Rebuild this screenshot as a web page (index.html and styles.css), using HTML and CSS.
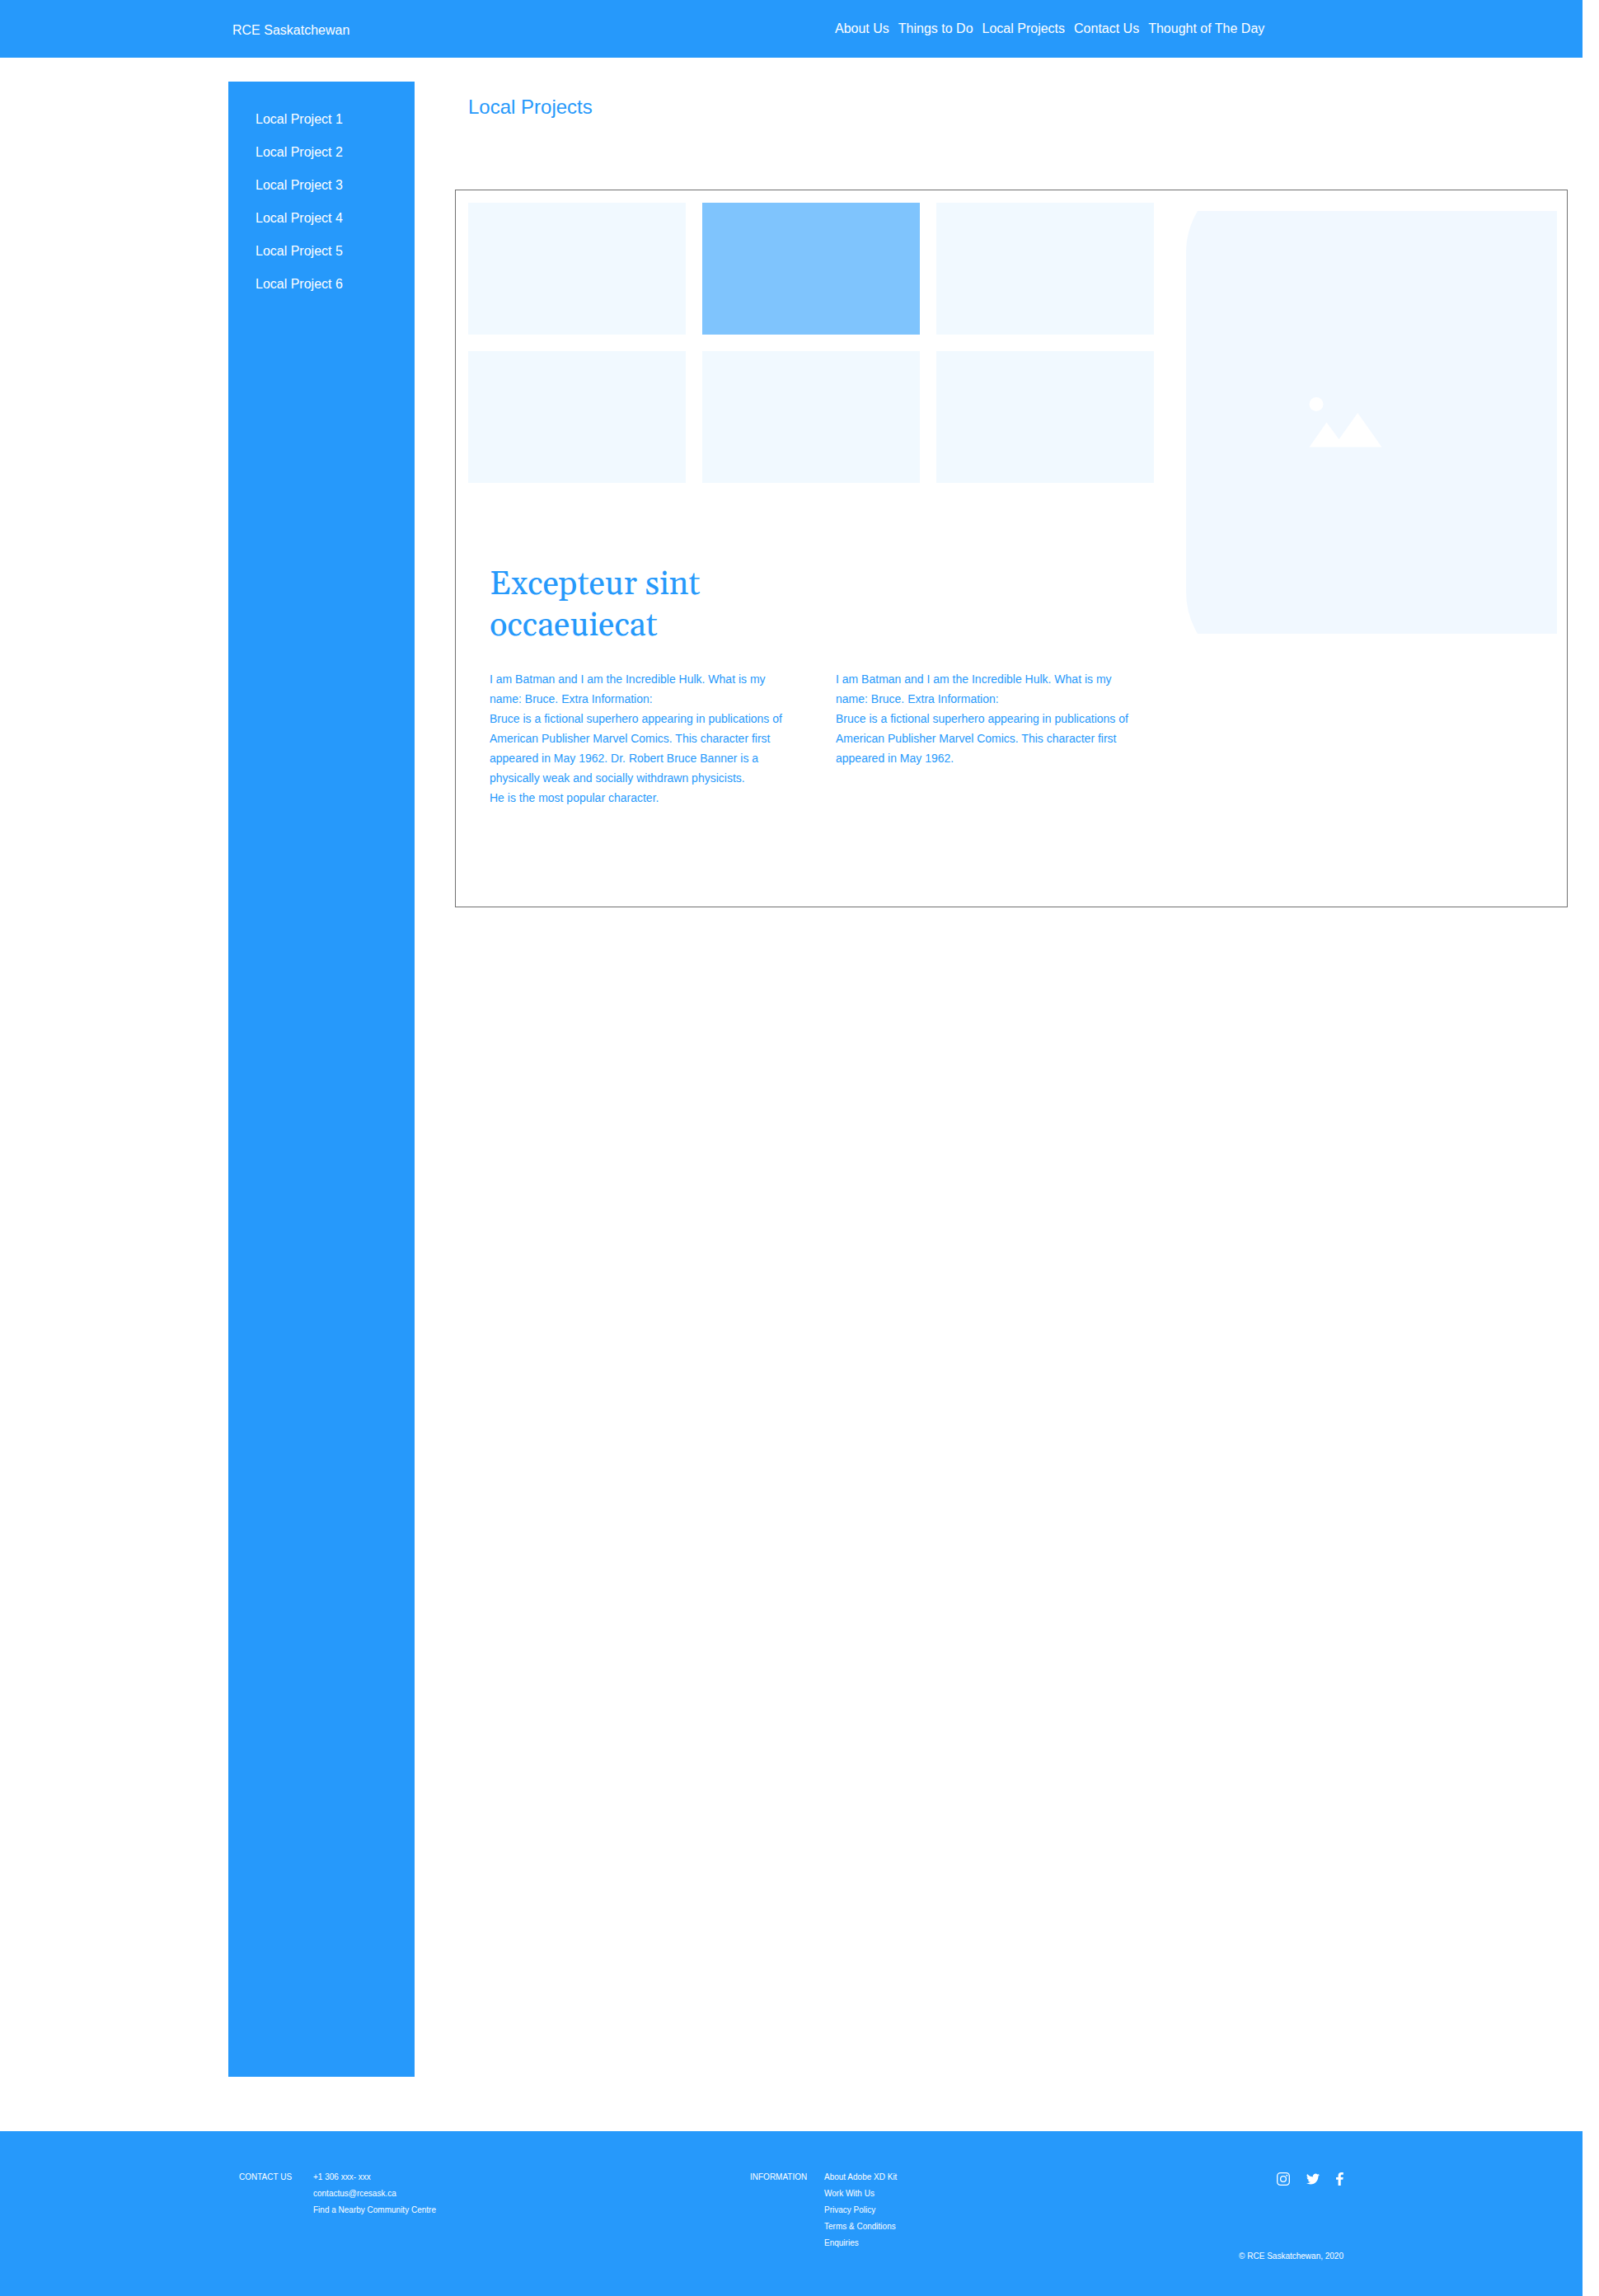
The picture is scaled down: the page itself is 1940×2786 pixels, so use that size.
FILE: index.html
```html
<!DOCTYPE html>
<html lang="en">
<head>
  <meta charset="utf-8">
  <meta name="viewport" content="width=device-width, initial-scale=1">
  <title>Local Projects - RCE Saskatchewan</title>
  <link rel="stylesheet" href="styles.css">
</head>
<body>
  <header class="site-header">
    <a class="brand" href="#">RCE Saskatchewan</a>
    <nav class="site-nav" aria-label="Main">
      <a href="#">About Us</a>
      <a href="#">Things to Do</a>
      <a href="#">Local Projects</a>
      <a href="#">Contact Us</a>
      <a href="#">Thought of The Day</a>
    </nav>
  </header>

  <main class="layout">
    <nav class="sidebar" aria-label="Projects">
      <a href="#">Local Project 1</a>
      <a href="#">Local Project 2</a>
      <a href="#">Local Project 3</a>
      <a href="#">Local Project 4</a>
      <a href="#">Local Project 5</a>
      <a href="#">Local Project 6</a>
    </nav>

    <section class="content">
      <h1 class="page-title">Local Projects</h1>
      <div class="panel">
        <div class="panel-main">
          <div class="tiles">
            <div class="tile"></div>
            <div class="tile tile-active"></div>
            <div class="tile"></div>
            <div class="tile"></div>
            <div class="tile"></div>
            <div class="tile"></div>
          </div>
          <article class="story">
            <h2 class="story-title">Excepteur sint occaeuiecat</h2>
            <div class="story-columns">
              <p>I am Batman and I am the Incredible Hulk. What is my name: Bruce. Extra Information:<br>Bruce is a fictional superhero appearing in publications of American Publisher Marvel Comics. This character first appeared in May 1962. Dr. Robert Bruce Banner is a physically weak and socially withdrawn physicists.<br>He is the most popular character.</p>
              <p>I am Batman and I am the Incredible Hulk. What is my name: Bruce. Extra Information:<br>Bruce is a fictional superhero appearing in publications of American Publisher Marvel Comics. This character first appeared in May 1962.</p>
            </div>
          </article>
        </div>
        <svg class="picture" viewBox="0 0 450 513" aria-hidden="true">
          <path class="picture-back" d="M14 0H450V513H14A100 100 0 0 1 0 462V51A100 100 0 0 1 14 0Z"/>
          <circle class="picture-mark" cx="158" cy="234.5" r="8.5"/>
          <path class="picture-mark" d="M149.5 286.5L170.5 256.5L185.500 277L208.200 245L237.500 286.5Z"/>
        </svg>
      </div>
    </section>
  </main>

  <footer class="site-footer">
    <div class="footer-group">
      <h3>CONTACT US</h3>
      <ul>
        <li>+1 306 xxx- xxx</li>
        <li><a href="#">contactus@rcesask.ca</a></li>
        <li><a href="#">Find a Nearby Community Centre</a></li>
      </ul>
    </div>
    <div class="footer-group">
      <h3>INFORMATION</h3>
      <ul>
        <li><a href="#">About Adobe XD Kit</a></li>
        <li><a href="#">Work With Us</a></li>
        <li><a href="#">Privacy Policy</a></li>
        <li><a href="#">Terms &amp; Conditions</a></li>
        <li><a href="#">Enquiries</a></li>
      </ul>
    </div>
    <div class="footer-end">
      <div class="social">
        <a href="#" aria-label="Instagram">
          <svg width="16" height="16" viewBox="0 0 16 16" fill="none" stroke="#fff" stroke-width="1.3">
            <rect x="0.7" y="0.7" width="14.6" height="14.6" rx="3.8"/>
            <circle cx="8" cy="8" r="3.4"/>
            <circle cx="12.300" cy="3.700" r="0.950" fill="#fff" stroke="none"/>
          </svg>
        </a>
        <a href="#" aria-label="Twitter">
          <svg width="16" height="16" viewBox="0 0 24 24" fill="#fff">
            <path d="M23.950 4.570a10 10 0 0 1-2.820.77 4.960 4.960 0 0 0 2.160-2.720c-.95.56-2 .96-3.130 1.190a4.920 4.920 0 0 0-8.380 4.480C7.690 8.100 4.070 6.130 1.640 3.160a4.920 4.920 0 0 0 1.520 6.570 4.900 4.900 0 0 1-2.230-.61v.06a4.920 4.920 0 0 0 3.950 4.830 5 5 0 0 1-2.210.08 4.940 4.940 0 0 0 4.600 3.420A9.870 9.870 0 0 1 0 19.540a13.990 13.990 0 0 0 7.550 2.210c9.050 0 14-7.500 14-13.980 0-.21 0-.42-.02-.63a9.940 9.940 0 0 0 2.460-2.550z"/>
          </svg>
        </a>
        <a href="#" aria-label="Facebook">
          <svg width="9" height="16" viewBox="0 0 9 16" fill="#fff">
            <path d="M2.600 16V8.800H0V5.900h2.600V3.800C2.600 1.400 4.100 0 6.400 0 7.500 0 8.500.1 8.800.1v2.700H7.200c-1.300 0-1.500.6-1.500 1.500v1.600h3l-.4 2.900H5.700V16Z"/>
          </svg>
        </a>
      </div>
      <p>© RCE Saskatchewan, 2020</p>
    </div>
  </footer>
</body>
</html>
```
FILE: styles.css
```css
* {
  box-sizing: border-box;
}

body {
  display: flex;
  flex-direction: column;
  min-height: 100vh;
  margin: 0;
  padding-right: 20px;
  background: #fff;
  color: #2699fb;
  font-family: "Liberation Sans", Arial, sans-serif;
  font-size: 16px;
  line-height: 20px;
}

h1, h2, h3, p, ul {
  margin: 0;
  padding: 0;
  font-weight: normal;
}

ul {
  list-style: none;
}

a {
  color: inherit;
  text-decoration: none;
}

.site-header {
  display: grid;
  grid-template-columns: 731px 1fr;
  align-items: center;
  min-height: 70px;
  padding-left: 282px;
  background: #2699fb;
  color: #fff;
}

.brand {
  padding-top: 4px;
}

.site-nav {
  display: flex;
  gap: 11px;
}

.layout {
  display: grid;
  flex: 1;
  grid-template-columns: 226px 1fr;
  gap: 49px;
  padding: 29px 18px 66px 277px;
}

.sidebar {
  display: flex;
  flex-direction: column;
  padding: 26px 33px;
  background: #2699fb;
  color: #fff;
  line-height: 40px;
}

.page-title {
  padding: 17px 16px 86px;
  font-size: 24px;
  line-height: 28px;
}

.panel {
  display: grid;
  grid-template-columns: 1fr 450px;
  gap: 39px;
  padding: 15px 12px 120px 15px;
  border: 1px solid #707070;
}

.tiles {
  display: grid;
  grid-template-columns: repeat(3, 1fr);
  gap: 20px;
}

.tile {
  height: 160px;
  background: #f1f9ff;
}

.tile-active {
  background: #7fc4fd;
}

.story {
  padding: 99px 26px 0;
}

.story-title {
  max-width: 360px;
  font-family: Georgia, Gelasio, "Liberation Serif", serif;
  font-size: 40px;
  line-height: 50px;
}

.story-columns {
  display: grid;
  grid-template-columns: 1fr 1fr;
  gap: 60px;
  margin-top: 27px;
  font-size: 14px;
  line-height: 24px;
}

.picture {
  width: 100%;
  margin-top: 10px;
}

.picture-back {
  fill: #f1f8ff;
}

.picture-mark {
  fill: #fff;
}

.site-footer {
  display: grid;
  grid-template-columns: 620px 1fr auto;
  padding: 46px 290px 38px 290px;
  background: #2699fb;
  color: #fff;
  font-size: 10px;
  line-height: 20px;
}

.footer-group {
  display: grid;
  grid-template-columns: 90px 1fr;
}

.footer-group h3 {
  font-size: 10px;
}

.footer-end {
  display: flex;
  flex-direction: column;
  justify-content: space-between;
  align-items: flex-end;
  min-height: 116px;
}

.social {
  display: flex;
  gap: 20px;
  padding-top: 4px;
}

.social svg {
  display: block;
}
```
